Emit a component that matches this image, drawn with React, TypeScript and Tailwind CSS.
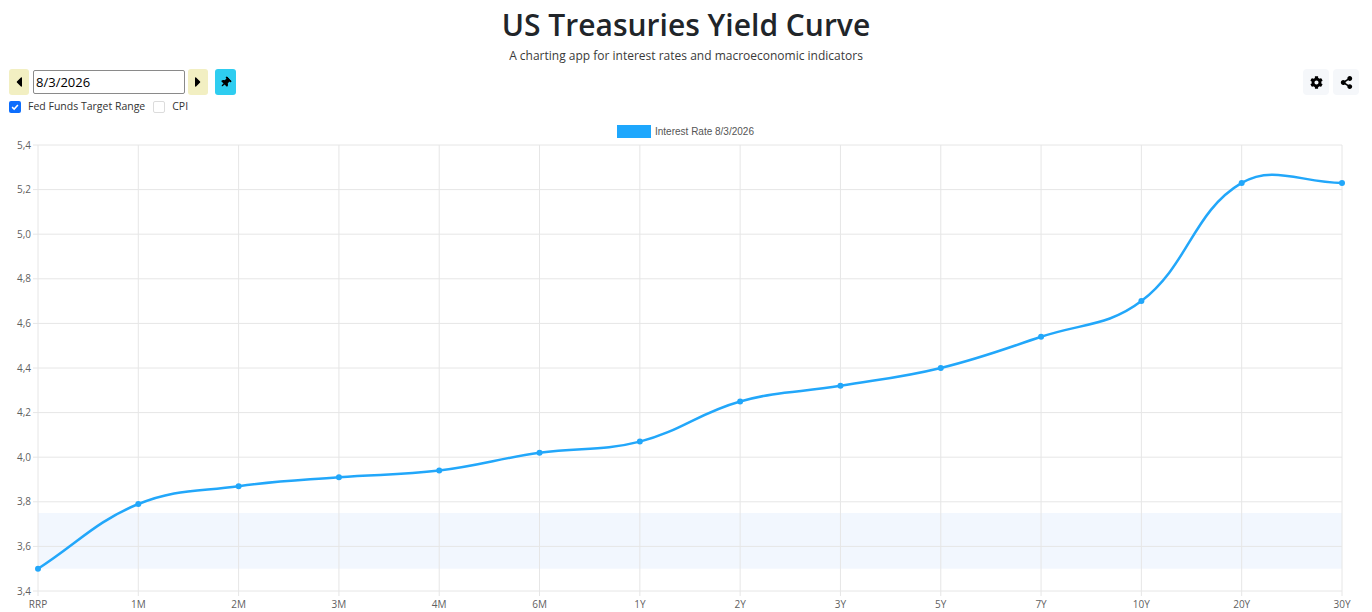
import { FaCaretLeft, FaCaretRight, FaThumbtack, FaCog, FaShareAlt } from "react-icons/fa"

const TOP = 116
const LABELS = ["RRP", "1M", "2M", "3M", "4M", "6M", "1Y", "2Y", "3Y", "5Y", "7Y", "10Y", "20Y", "30Y"]
const RATES = [3.5, 3.79, 3.87, 3.91, 3.94, 4.02, 4.07, 4.25, 4.32, 4.4, 4.54, 4.7, 5.23, 5.23]
const X0 = 38
const X1 = 1342
const Y_TOP = 145 - TOP
const Y_BOT = 591 - TOP
const Y_MIN = 3.4
const Y_MAX = 5.4

const xAt = (i: number) => X0 + ((X1 - X0) / (LABELS.length - 1)) * i
const yAt = (v: number) => Y_BOT - ((v - Y_MIN) / (Y_MAX - Y_MIN)) * (Y_BOT - Y_TOP)

type Pt = { x: number; y: number }

// chart.js style cardinal spline, tension 0.4
function curvePath(pts: Pt[], t = 0.4) {
  const cps = pts.map((cur, i) => {
    const prev = pts[i - 1] ?? cur
    const next = pts[i + 1] ?? cur
    const d01 = Math.hypot(cur.x - prev.x, cur.y - prev.y)
    const d12 = Math.hypot(next.x - cur.x, next.y - cur.y)
    let s01 = d01 / (d01 + d12)
    let s12 = d12 / (d01 + d12)
    if (isNaN(s01)) s01 = 0
    if (isNaN(s12)) s12 = 0
    const fa = t * s01
    const fb = t * s12
    return {
      c1: { x: cur.x - fa * (next.x - prev.x), y: cur.y - fa * (next.y - prev.y) },
      c2: { x: cur.x + fb * (next.x - prev.x), y: cur.y + fb * (next.y - prev.y) },
    }
  })
  let d = `M${pts[0].x},${pts[0].y}`
  for (let i = 1; i < pts.length; i++) {
    const a = cps[i - 1].c2
    const b = cps[i].c1
    d += ` C${a.x},${a.y} ${b.x},${b.y} ${pts[i].x},${pts[i].y}`
  }
  return d
}

function Chart() {
  const pts = RATES.map((v, i) => ({ x: xAt(i), y: yAt(v) }))
  const ticks = [5.4, 5.2, 5.0, 4.8, 4.6, 4.4, 4.2, 4.0, 3.8, 3.6, 3.4]
  return (
    <svg width={1372} height={612 - TOP} className="block">
      {/* legend */}
      <rect x={617} y={125 - TOP} width={34} height={13} fill="#1ea7fd" />
      <text x={655} y={135 - TOP} fontSize={10} fill="#555" fontFamily="'Liberation Sans', Arial, sans-serif">
        Interest Rate 8/3/2026
      </text>

      {/* fed funds band */}
      <rect x={X0} y={yAt(3.75)} width={X1 - X0} height={yAt(3.5) - yAt(3.75)} fill="#f2f7fe" />

      {/* grid */}
      {ticks.map((v) => (
        <g key={v}>
          <line x1={X0 - 5} x2={X1} y1={yAt(v)} y2={yAt(v)} stroke="#e6e6e6" strokeWidth={1} />
          <text
            x={X0 - 7}
            y={yAt(v) + 3.5}
            fontSize={10}
            textAnchor="end"
            fill="#5f5f5f"
            fontFamily="'Open Sans', sans-serif"
          >
            {v.toFixed(1).replace(".", ",")}
          </text>
        </g>
      ))}
      {LABELS.map((l, i) => (
        <g key={l}>
          <line x1={xAt(i)} x2={xAt(i)} y1={Y_TOP} y2={Y_BOT + 5} stroke="#e6e6e6" strokeWidth={1} />
          <text
            x={xAt(i)}
            y={Y_BOT + 17}
            fontSize={10}
            textAnchor="middle"
            fill="#5f5f5f"
            fontFamily="'Open Sans', sans-serif"
          >
            {l}
          </text>
        </g>
      ))}

      {/* yield curve */}
      <path d={curvePath(pts)} fill="none" stroke="#22a7fa" strokeWidth={2.5} />
      {pts.map((p, i) => (
        <circle key={i} cx={p.x} cy={p.y} r={3} fill="#22a7fa" />
      ))}
    </svg>
  )
}

export default function App() {
  return (
    <div className="w-[1372px] h-[612px] bg-white overflow-hidden font-['Open_Sans',sans-serif] text-[#212529]">
      {/* Header */}
      <div className="h-[66px] text-center">
        <h1 className="pt-[4px] text-[30px] leading-[41px] font-semibold text-[#212529]">US Treasuries Yield Curve</h1>
        <p className="mt-[2px] text-[12px] leading-[18px] text-[#3a3a3a]">
          A charting app for interest rates and macroeconomic indicators
        </p>
      </div>

      {/* Controls */}
      <div className="h-[50px] flex justify-between pl-[9px] pr-[13px] pt-[3px]">
        <div className="flex flex-col gap-[4px]">
          <div className="flex items-center">
            <button className="w-[20px] h-[26px] rounded-[3px] bg-[#f2efc2] flex items-center justify-center">
              <FaCaretLeft className="w-[14px] h-[16px] text-black" />
            </button>
            <input
              readOnly
              value="8/3/2026"
              className="ml-[4px] w-[152px] h-[24px] border border-[#8a8a8a] rounded-[2px] px-[2px] text-[13px] text-black outline-none"
            />
            <button className="ml-[3px] w-[20px] h-[26px] rounded-[3px] bg-[#f2efc2] flex items-center justify-center">
              <FaCaretRight className="w-[14px] h-[16px] text-black" />
            </button>
            <button className="ml-[7px] w-[21px] h-[26px] rounded-[3px] bg-[#2ecdf0] flex items-center justify-center">
              <FaThumbtack className="w-[11px] h-[11px] text-black rotate-45" />
            </button>
          </div>
          <div className="flex items-center text-[10.5px] text-[#333]">
            <span className="w-[12px] h-[12px] rounded-[2px] bg-[#0d6efd] flex items-center justify-center">
              <svg viewBox="0 0 12 12" className="w-[10px] h-[10px]">
                <path d="M2.5 6.2 L5 8.5 L9.5 3.5" fill="none" stroke="white" strokeWidth={1.8} />
              </svg>
            </span>
            <span className="ml-[7px]">Fed Funds Target Range</span>
            <span className="ml-[8px] w-[12px] h-[12px] rounded-[2px] border border-[#dcdcdc] bg-white" />
            <span className="ml-[7px]">CPI</span>
          </div>
        </div>
        <div className="flex gap-[4px]">
          <button className="w-[26px] h-[26px] rounded-[4px] bg-[#f5f7fa] flex items-center justify-center">
            <FaCog className="w-[13px] h-[13px] text-black" />
          </button>
          <button className="w-[26px] h-[26px] rounded-[4px] bg-[#f5f7fa] flex items-center justify-center">
            <FaShareAlt className="w-[13px] h-[13px] text-black" />
          </button>
        </div>
      </div>

      <Chart />
    </div>
  )
}
